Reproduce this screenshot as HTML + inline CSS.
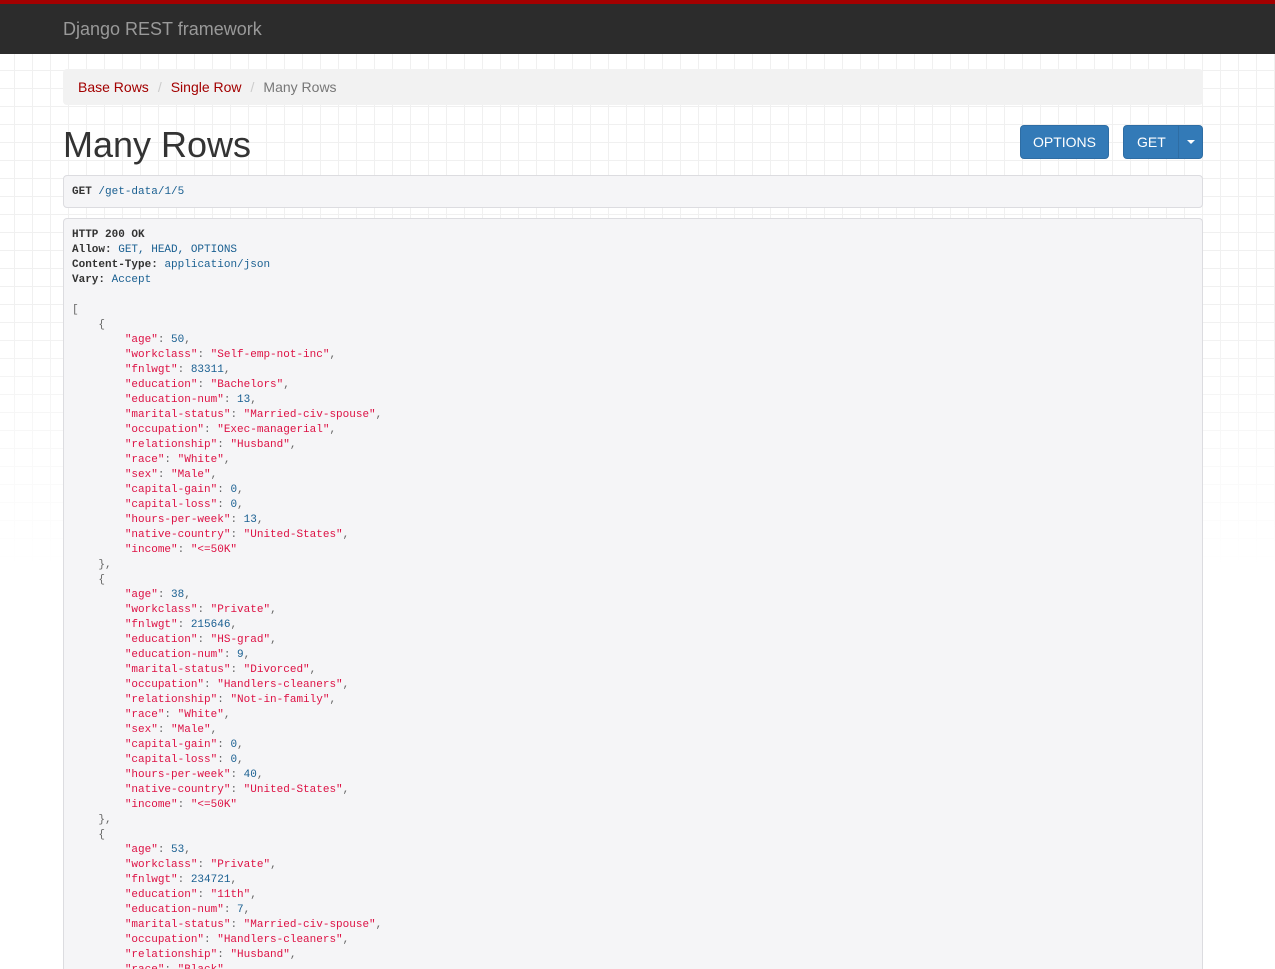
<!DOCTYPE html>
<html><head><meta charset="utf-8"><style>
*{box-sizing:border-box}
html,body{margin:0;padding:0;overflow:hidden;height:969px}
body{width:1275px;height:969px;overflow:hidden;font-family:"Liberation Sans",Arial,sans-serif;color:#333;background:#fff;
background-image:linear-gradient(#f0f0f0 1px,transparent 1px),linear-gradient(90deg,#f0f0f0 1px,transparent 1px);
background-size:18px 18px;background-position:-4px -2px;position:relative}
.fade{position:absolute;left:0;top:300px;width:1275px;height:669px;background:linear-gradient(#fff0,#fff 40%)}
.nav{position:absolute;left:0;top:0;width:1275px;height:54px;background:#2c2c2c;border-top:4px solid #a30000}
.nav span{position:absolute;left:63px;top:15px;font-size:18px;color:#999}
.bc{position:absolute;left:63px;top:69px;width:1140px;height:36px;background:#f2f2f2;border-radius:4px;font-size:14px;padding:9px 15px;line-height:18px}
.bc a{color:#a30000;text-decoration:none}.bc .sep{color:#ccc;padding:0 9px}.bc .act{color:#777}
h1{position:absolute;left:63px;top:123px;margin:0;font-size:36px;font-weight:400;color:#333;line-height:44px}
.btn{position:absolute;top:125px;height:34px;background:#337ab7;border:1px solid #2e6da4;border-radius:4px;color:#fff;font-size:14px;line-height:32px;text-align:center}
.box{position:absolute;left:63px;width:1140px;background:#f5f5f7;border:1px solid #dcdce0;border-radius:4px;font-family:"Liberation Mono",monospace;font-size:11px;line-height:15px;padding:0 8px;white-space:pre;color:#333;overflow:hidden}
.s{color:#dd1144}.n{color:#195f91}.p{color:#666}b{font-weight:bold;color:#333}
</style></head><body>
<div class="fade"></div>
<div class="nav"><span>Django REST framework</span></div>
<div class="bc"><a>Base Rows</a><span class="sep">/</span><a>Single Row</a><span class="sep">/</span><span class="act">Many Rows</span></div>
<h1>Many Rows</h1>
<div class="btn" style="left:1020px;width:89px">OPTIONS</div>
<div class="btn" style="left:1123px;width:80px;text-align:left;padding-left:13px">GET<span style="position:absolute;left:54px;top:0;width:1px;height:32px;background:#2e6da4"></span><span style="position:absolute;left:63px;top:14px;width:0;height:0;border-left:4px solid transparent;border-right:4px solid transparent;border-top:4px solid #fff"></span></div>
<div class="box" style="top:175px;height:33px;padding-top:9px"><b>GET</b> <span class="n">/get-data/</span><span class="n">1</span><span class="n">/5</span></div>
<div class="box" style="top:218px;height:751px;padding-top:9px;border-bottom:none;border-radius:4px 4px 0 0"><b>HTTP 200 OK</b>
<b>Allow:</b> <span class="n">GET, HEAD, OPTIONS</span>
<b>Content-Type:</b> <span class="n">application/json</span>
<b>Vary:</b> <span class="n">Accept</span>

<span class="p">[</span>
    <span class="p">{</span>
        <span class="s">"age"</span><span class="p">: </span><span class="n">50</span><span class="p">,</span>
        <span class="s">"workclass"</span><span class="p">: </span><span class="s">"Self-emp-not-inc"</span><span class="p">,</span>
        <span class="s">"fnlwgt"</span><span class="p">: </span><span class="n">83311</span><span class="p">,</span>
        <span class="s">"education"</span><span class="p">: </span><span class="s">"Bachelors"</span><span class="p">,</span>
        <span class="s">"education-num"</span><span class="p">: </span><span class="n">13</span><span class="p">,</span>
        <span class="s">"marital-status"</span><span class="p">: </span><span class="s">"Married-civ-spouse"</span><span class="p">,</span>
        <span class="s">"occupation"</span><span class="p">: </span><span class="s">"Exec-managerial"</span><span class="p">,</span>
        <span class="s">"relationship"</span><span class="p">: </span><span class="s">"Husband"</span><span class="p">,</span>
        <span class="s">"race"</span><span class="p">: </span><span class="s">"White"</span><span class="p">,</span>
        <span class="s">"sex"</span><span class="p">: </span><span class="s">"Male"</span><span class="p">,</span>
        <span class="s">"capital-gain"</span><span class="p">: </span><span class="n">0</span><span class="p">,</span>
        <span class="s">"capital-loss"</span><span class="p">: </span><span class="n">0</span><span class="p">,</span>
        <span class="s">"hours-per-week"</span><span class="p">: </span><span class="n">13</span><span class="p">,</span>
        <span class="s">"native-country"</span><span class="p">: </span><span class="s">"United-States"</span><span class="p">,</span>
        <span class="s">"income"</span><span class="p">: </span><span class="s">"&lt;=50K"</span>
    <span class="p">},</span>
    <span class="p">{</span>
        <span class="s">"age"</span><span class="p">: </span><span class="n">38</span><span class="p">,</span>
        <span class="s">"workclass"</span><span class="p">: </span><span class="s">"Private"</span><span class="p">,</span>
        <span class="s">"fnlwgt"</span><span class="p">: </span><span class="n">215646</span><span class="p">,</span>
        <span class="s">"education"</span><span class="p">: </span><span class="s">"HS-grad"</span><span class="p">,</span>
        <span class="s">"education-num"</span><span class="p">: </span><span class="n">9</span><span class="p">,</span>
        <span class="s">"marital-status"</span><span class="p">: </span><span class="s">"Divorced"</span><span class="p">,</span>
        <span class="s">"occupation"</span><span class="p">: </span><span class="s">"Handlers-cleaners"</span><span class="p">,</span>
        <span class="s">"relationship"</span><span class="p">: </span><span class="s">"Not-in-family"</span><span class="p">,</span>
        <span class="s">"race"</span><span class="p">: </span><span class="s">"White"</span><span class="p">,</span>
        <span class="s">"sex"</span><span class="p">: </span><span class="s">"Male"</span><span class="p">,</span>
        <span class="s">"capital-gain"</span><span class="p">: </span><span class="n">0</span><span class="p">,</span>
        <span class="s">"capital-loss"</span><span class="p">: </span><span class="n">0</span><span class="p">,</span>
        <span class="s">"hours-per-week"</span><span class="p">: </span><span class="n">40</span><span class="p">,</span>
        <span class="s">"native-country"</span><span class="p">: </span><span class="s">"United-States"</span><span class="p">,</span>
        <span class="s">"income"</span><span class="p">: </span><span class="s">"&lt;=50K"</span>
    <span class="p">},</span>
    <span class="p">{</span>
        <span class="s">"age"</span><span class="p">: </span><span class="n">53</span><span class="p">,</span>
        <span class="s">"workclass"</span><span class="p">: </span><span class="s">"Private"</span><span class="p">,</span>
        <span class="s">"fnlwgt"</span><span class="p">: </span><span class="n">234721</span><span class="p">,</span>
        <span class="s">"education"</span><span class="p">: </span><span class="s">"11th"</span><span class="p">,</span>
        <span class="s">"education-num"</span><span class="p">: </span><span class="n">7</span><span class="p">,</span>
        <span class="s">"marital-status"</span><span class="p">: </span><span class="s">"Married-civ-spouse"</span><span class="p">,</span>
        <span class="s">"occupation"</span><span class="p">: </span><span class="s">"Handlers-cleaners"</span><span class="p">,</span>
        <span class="s">"relationship"</span><span class="p">: </span><span class="s">"Husband"</span><span class="p">,</span>
        <span class="s">"race"</span><span class="p">: </span><span class="s">"Black"</span><span class="p">,</span>
</div>
</body></html>
